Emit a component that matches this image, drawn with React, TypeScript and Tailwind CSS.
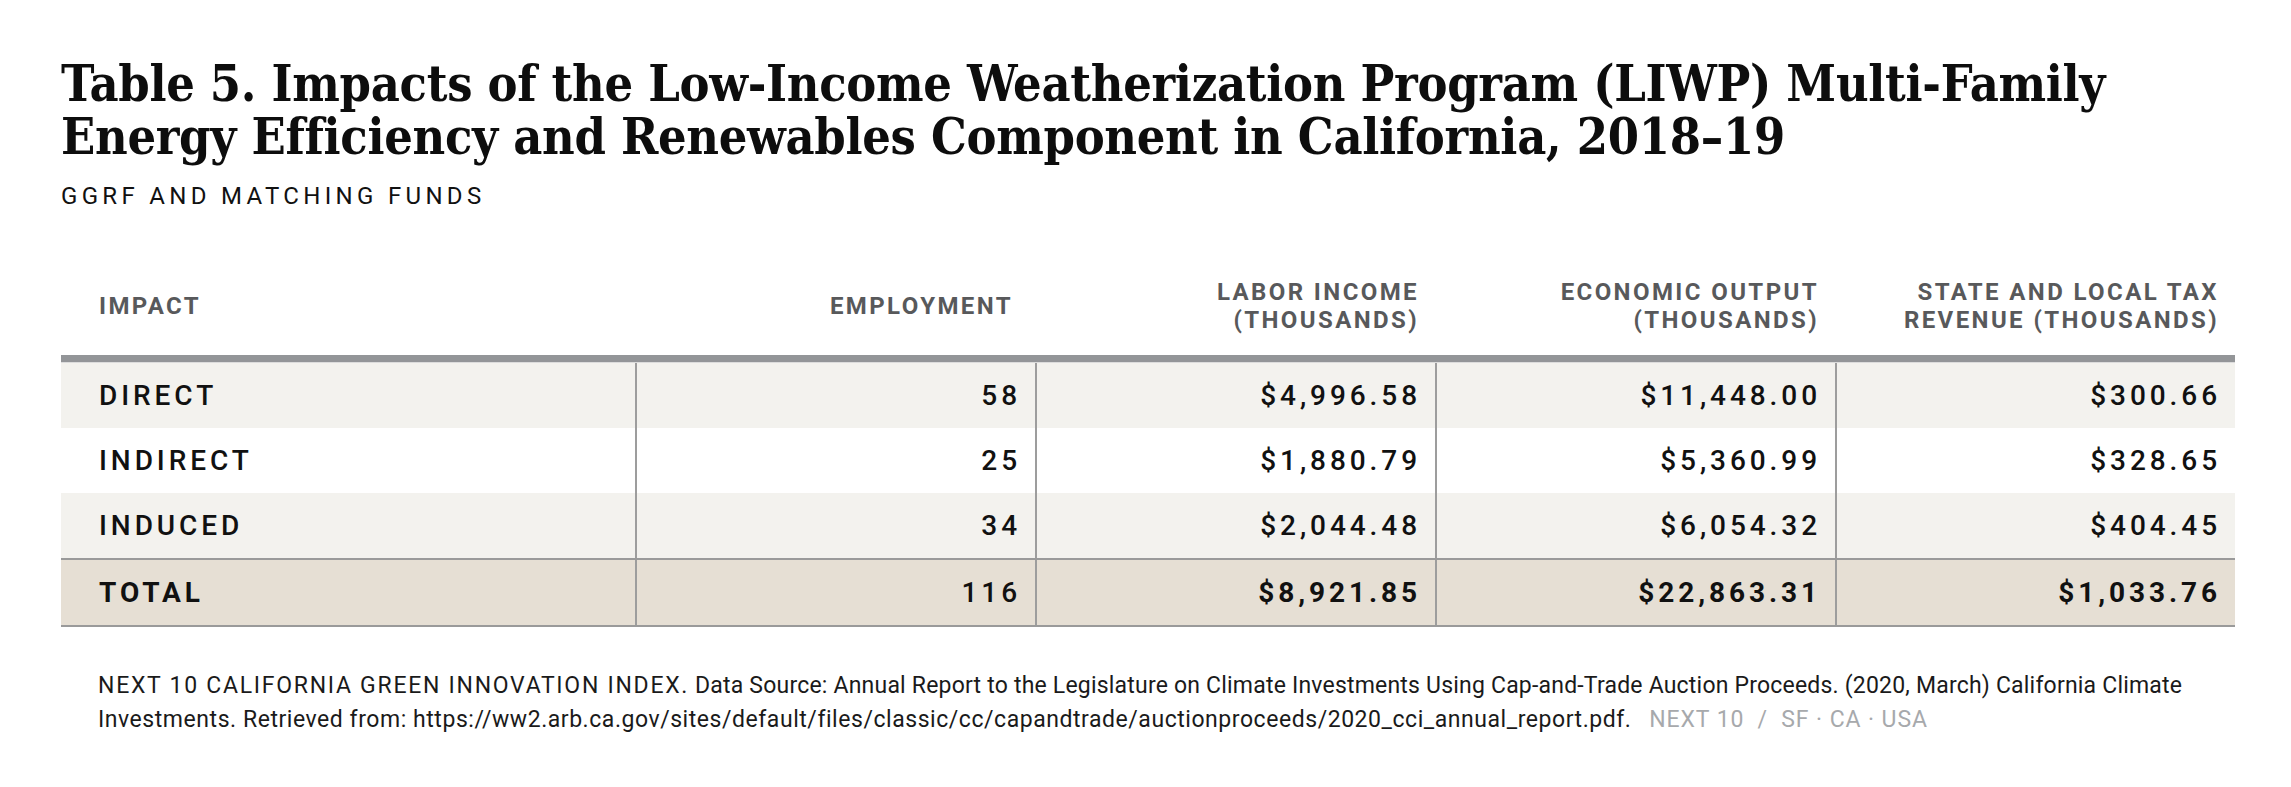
import React from "react";

const rows = [
  { label: "DIRECT", emp: "58", labor: "$4,996.58", output: "$11,448.00", tax: "$300.66", bg: "bg-[#f3f2ee]" },
  { label: "INDIRECT", emp: "25", labor: "$1,880.79", output: "$5,360.99", tax: "$328.65", bg: "bg-white" },
  { label: "INDUCED", emp: "34", labor: "$2,044.48", output: "$6,054.32", tax: "$404.45", bg: "bg-[#f3f2ee]" },
];

const sans = "font-['Roboto','Liberation_Sans',sans-serif]";

export default function App() {
  return (
    <div className={`w-[2291px] h-[787px] bg-white pl-[61px] pr-[56px] pt-[57px] text-[#111111] ${sans}`}>
      <h1 className="font-['DejaVu_Serif','Liberation_Serif',serif] font-stretch-condensed font-bold text-[50px] leading-[53px] tracking-[-0.3px] text-[#0d0d0d]">
        Table 5. Impacts of the Low-Income Weatherization Program (LIWP) Multi-Family
        <br />
        Energy Efficiency and Renewables Component in California, 2018–19
      </h1>
      <div className="mt-[19px] text-[24px] leading-[28px] tracking-[0.18em] text-[#111111]">
        GGRF AND MATCHING FUNDS
      </div>

      <div className="mt-[47px] w-[2174px]">
        <div className="grid grid-cols-[574px_400px_400px_400px_400px] h-[98px] items-center font-bold text-[24px] leading-[28px] tracking-[0.1em] text-[#58595b]">
          <div className="pl-[38px]">IMPACT</div>
          <div className="text-right pr-[22px]">EMPLOYMENT</div>
          <div className="text-right pr-[16px]">
            LABOR INCOME
            <br />
            (THOUSANDS)
          </div>
          <div className="text-right pr-[16px]">
            ECONOMIC OUTPUT
            <br />
            (THOUSANDS)
          </div>
          <div className="text-right pr-[16px]">
            STATE AND LOCAL TAX
            <br />
            REVENUE (THOUSANDS)
          </div>
        </div>
        <div className="h-[8px] bg-[#939598] border-b border-[#dcdcdc]" />
        {rows.map((r) => (
          <div
            key={r.label}
            className={`grid grid-cols-[574px_400px_400px_400px_400px] h-[65px] items-stretch text-[28px] tracking-[0.14em] font-medium ${r.bg}`}
          >
            <div className="pl-[38px] flex items-center">{r.label}</div>
            <div className="border-l-2 border-[#9d9d9d] flex items-center justify-end pr-[14px]">{r.emp}</div>
            <div className="border-l-2 border-[#9d9d9d] flex items-center justify-end pr-[14px]">{r.labor}</div>
            <div className="border-l-2 border-[#9d9d9d] flex items-center justify-end pr-[14px]">{r.output}</div>
            <div className="border-l-2 border-[#9d9d9d] flex items-center justify-end pr-[14px]">{r.tax}</div>
          </div>
        ))}
        <div className="grid grid-cols-[574px_400px_400px_400px_400px] h-[69px] items-stretch text-[28px] tracking-[0.14em] font-bold bg-[#e6dfd4] border-t-2 border-b-2 border-[#9a9a9a]">
          <div className="pl-[38px] flex items-center">TOTAL</div>
          <div className="border-l-2 border-[#9d9d9d] flex items-center justify-end pr-[14px] font-medium">116</div>
          <div className="border-l-2 border-[#9d9d9d] flex items-center justify-end pr-[14px]">$8,921.85</div>
          <div className="border-l-2 border-[#9d9d9d] flex items-center justify-end pr-[14px]">$22,863.31</div>
          <div className="border-l-2 border-[#9d9d9d] flex items-center justify-end pr-[14px]">$1,033.76</div>
        </div>
      </div>

      <div className="mt-[42px] pl-[37px] text-[23px] leading-[34px] text-[#1a1a1a]">
        <span className="tracking-[0.075em]">NEXT 10 CALIFORNIA GREEN INNOVATION INDEX.</span>
        <span className="tracking-[0.2px]"> Data Source: Annual Report to the Legislature on Climate Investments Using Cap-and-Trade Auction Proceeds. (2020, March) California Climate</span>
        <br />
        <span className="tracking-[0.55px]">Investments. Retrieved from: https://ww2.arb.ca.gov/sites/default/files/classic/cc/capandtrade/auctionproceeds/2020_cci_annual_report.pdf.</span>{" "}
        <span className="ml-[12px] tracking-[0.04em] text-[#a7a9ac]">NEXT 10&nbsp;&nbsp;/&nbsp;&nbsp;SF · CA · USA</span>
      </div>
    </div>
  );
}
